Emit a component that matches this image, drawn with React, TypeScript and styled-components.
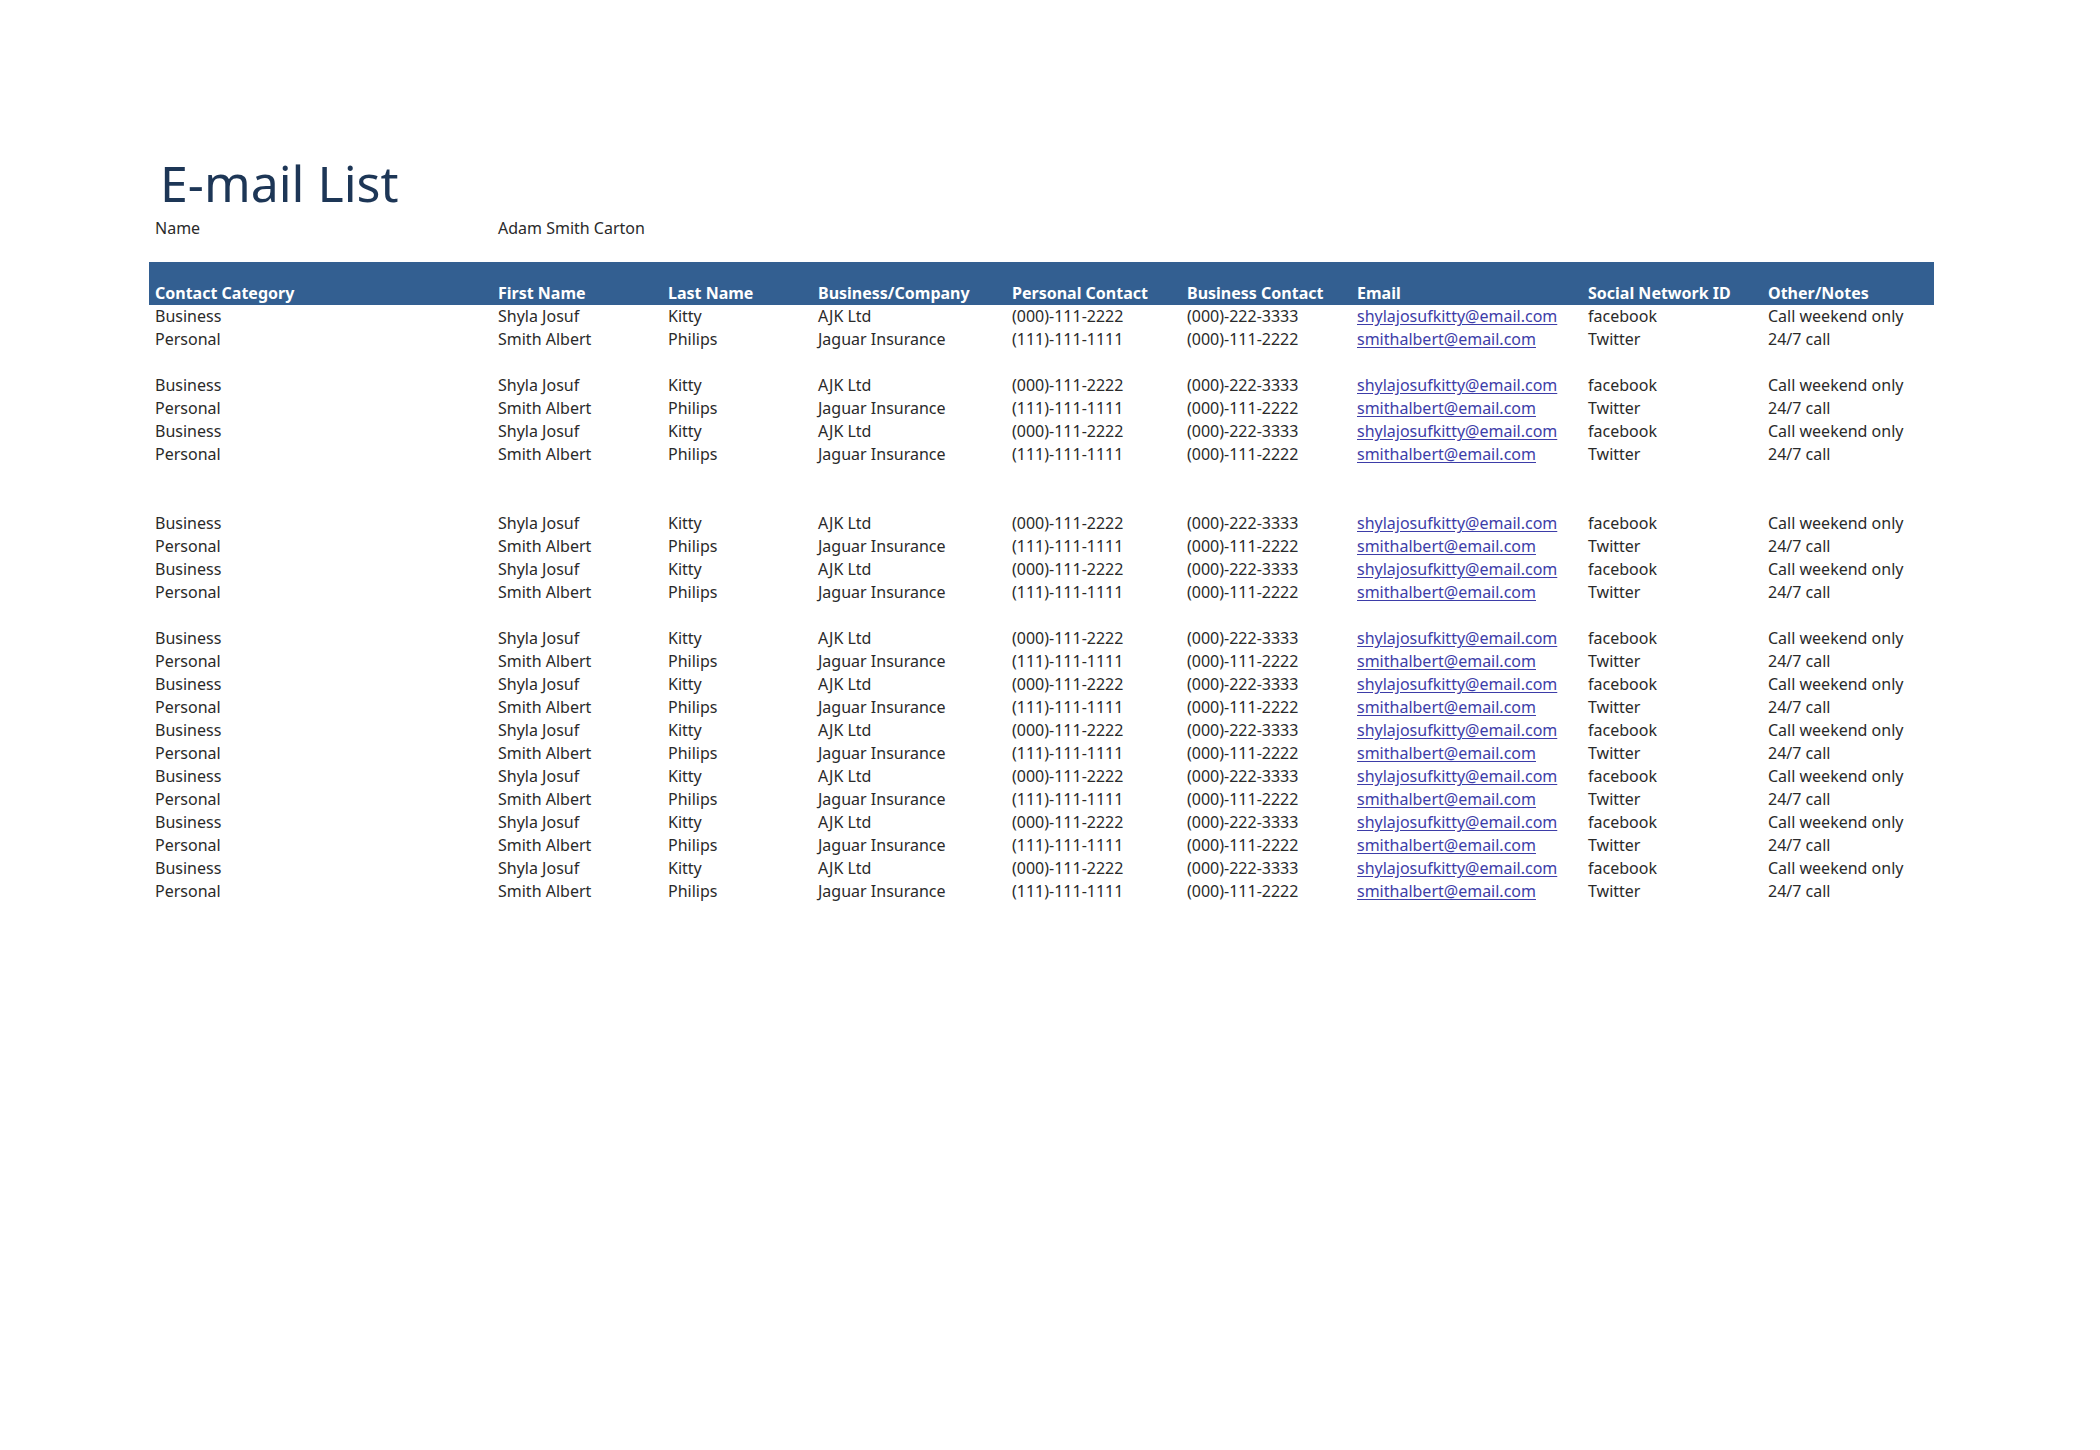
import styled, { createGlobalStyle } from "styled-components";

const GlobalStyle = createGlobalStyle`
  body {
    margin: 0;
    background: #ffffff;
    font-family: "Noto Sans", "Open Sans", sans-serif;
  }
`;

const columns = "343px 170px 150px 194px 175px 170px 231px 180px 172px";

const Page = styled.div`
  width: 2100px;
  min-height: 1450px;
  padding: 153px 0 0 149px;
  box-sizing: border-box;
`;

const Title = styled.h1`
  margin: 0 0 0 11px;
  font-size: 50px;
  line-height: 60px;
  font-weight: 400;
  color: #1d3656;
`;

const Grid = styled.div`
  display: grid;
  grid-template-columns: ${columns};
`;

const NameRow = styled(Grid)`
  margin-top: 4px;
  height: 23px;
`;

const Table = styled.div`
  width: max-content;
  margin-top: 22px;
`;

const HeaderRow = styled(Grid)`
  height: 43px;
  align-items: end;
  background: #335f91;
`;

const HeaderCell = styled.div`
  padding-left: 6px;
  font-size: 16px;
  font-weight: 700;
  line-height: 23px;
  color: #ffffff;
  white-space: nowrap;
`;

const Row = styled(Grid)`
  height: 23px;
`;

const Cell = styled.div`
  padding-left: 6px;
  font-size: 16px;
  line-height: 23px;
  color: #2a2a2a;
  white-space: nowrap;
`;

const EmailLink = styled.a`
  color: #3d3da8;
  text-decoration: underline;
  text-underline-offset: 2px;
`;

const headers = [
  "Contact Category",
  "First Name",
  "Last Name",
  "Business/Company",
  "Personal Contact",
  "Business Contact",
  "Email",
  "Social Network ID",
  "Other/Notes",
];

interface IContact {
  category: string;
  first: string;
  last: string;
  company: string;
  personal: string;
  business: string;
  email: string;
  social: string;
  notes: string;
}

const business: IContact = {
  category: "Business",
  first: "Shyla Josuf",
  last: "Kitty",
  company: "AJK Ltd",
  personal: "(000)-111-2222",
  business: "(000)-222-3333",
  email: "shylajosufkitty@email.com",
  social: "facebook",
  notes: "Call weekend only",
};

const personal: IContact = {
  category: "Personal",
  first: "Smith Albert",
  last: "Philips",
  company: "Jaguar Insurance",
  personal: "(111)-111-1111",
  business: "(000)-111-2222",
  email: "smithalbert@email.com",
  social: "Twitter",
  notes: "24/7 call",
};

// null = empty spreadsheet row
const rows: (IContact | null)[] = [
  business,
  personal,
  null,
  business,
  personal,
  business,
  personal,
  null,
  null,
  business,
  personal,
  business,
  personal,
  null,
  business,
  personal,
  business,
  personal,
  business,
  personal,
  business,
  personal,
  business,
  personal,
  business,
  personal,
];

function App() {
  return (
    <>
      <GlobalStyle />
      <Page>
        <Title>E-mail List</Title>
        <NameRow>
          <Cell>Name</Cell>
          <Cell>Adam Smith Carton</Cell>
        </NameRow>
        <Table>
          <HeaderRow>
            {headers.map((h) => (
              <HeaderCell key={h}>{h}</HeaderCell>
            ))}
          </HeaderRow>
          {rows.map((c, i) =>
            c ? (
              <Row key={i}>
                <Cell>{c.category}</Cell>
                <Cell>{c.first}</Cell>
                <Cell>{c.last}</Cell>
                <Cell>{c.company}</Cell>
                <Cell>{c.personal}</Cell>
                <Cell>{c.business}</Cell>
                <Cell>
                  <EmailLink href={`mailto:${c.email}`}>{c.email}</EmailLink>
                </Cell>
                <Cell>{c.social}</Cell>
                <Cell>{c.notes}</Cell>
              </Row>
            ) : (
              <Row key={i} />
            )
          )}
        </Table>
      </Page>
    </>
  );
}

export default App;
